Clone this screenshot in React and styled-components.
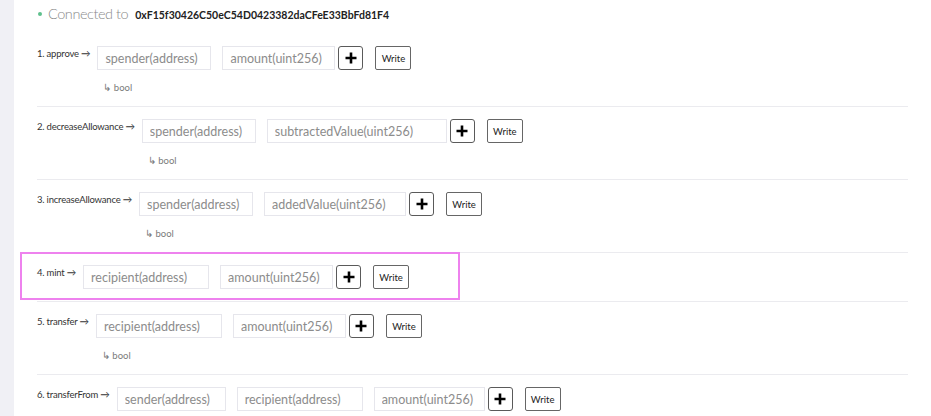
import React from "react";
import styled, { createGlobalStyle } from "styled-components";

const GlobalStyle = createGlobalStyle`
    body {
        margin: 0;
        background: #ffffff;
        font-family: Lato, "Noto Sans", sans-serif;
        color: #333;
    }
`;

const methods = [
    { name: "approve", inputs: [["spender(address)", 114], ["amount(uint256)", 113]], output: "bool" },
    { name: "decreaseAllowance", inputs: [["spender(address)", 114], ["subtractedValue(uint256)", 180]], output: "bool" },
    { name: "increaseAllowance", inputs: [["spender(address)", 114], ["addedValue(uint256)", 142]], output: "bool" },
    { name: "mint", inputs: [["recipient(address)", 126], ["amount(uint256)", 113]], highlight: true },
    { name: "transfer", inputs: [["recipient(address)", 126], ["amount(uint256)", 113]], output: "bool" },
    { name: "transferFrom", inputs: [["sender(address)", 109], ["recipient(address)", 126], ["amount(uint256)", 111]] },
];

const Page = styled.div`
    display: flex;
    min-height: 100vh;
`;

const Sidebar = styled.div`
    width: 14px;
    flex-shrink: 0;
    background: #f0f0f5;
`;

const Main = styled.div`
    flex: 1;
    padding: 0 23px;
`;

const Header = styled.div`
    display: flex;
    align-items: center;
    height: 20px;
    padding: 3px 0 11px;
`;

const Dot = styled.span`
    width: 4px;
    height: 4px;
    border-radius: 50%;
    background: #5fc08d;
    margin: 2px 6px 0 1px;
`;

const Status = styled.span`
    font-size: 14.5px;
    font-weight: 300;
    letter-spacing: -0.45px;
    color: #8a8a8a;
    margin-right: 7px;
`;

const Address = styled.span`
    font-size: 10.5px;
    font-weight: 700;
    color: #222;
    padding-top: 3px;
`;

const Row = styled.div`
    position: relative;
    display: grid;
    grid-template-columns: auto 1fr;
    column-gap: 7px;
    padding: 12px 0 ${p => (p.$output ? 10 : 12)}px;
    border-bottom: ${p => (p.$last ? "none" : "1px solid #ebebef")};

    ${p => p.$highlight && `
        &::after {
            content: "";
            position: absolute;
            top: -1px;
            left: -17px;
            width: 440px;
            height: 48px;
            box-sizing: border-box;
            border: 2px solid #ee82ee;
            pointer-events: none;
        }
    `}
`;

const Label = styled.div`
    font-size: 9.5px;
    letter-spacing: -0.2px;
    line-height: 16px;
    color: #333;
    white-space: nowrap;
`;

const Fields = styled.div`
    display: flex;
    align-items: center;
`;

const InputList = styled.div`
    display: flex;
    gap: 11px;
`;

const Input = styled.input`
    box-sizing: border-box;
    height: 24px;
    padding: 0 7px;
    border: 1px solid #e6e6ec;
    border-radius: 0;
    font-family: Lato, "Noto Sans", sans-serif;
    font-size: 12.5px;
    outline: none;

    &::placeholder {
        color: #8c8c8c;
    }
`;

const AddButton = styled.button`
    box-sizing: border-box;
    width: 25px;
    height: 24px;
    margin-left: 3px;
    padding: 0;
    display: flex;
    align-items: center;
    justify-content: center;
    background: #fff;
    border: 1px solid #5a5a5a;
    border-radius: 3px;
`;

const WriteButton = styled.button`
    box-sizing: border-box;
    width: 36px;
    height: 24px;
    margin-left: 12px;
    padding: 0;
    background: #fff;
    border: 1px solid #666;
    border-radius: 2px;
    font-family: Lato, "Noto Sans", sans-serif;
    font-size: 9.5px;
    color: #222;
`;

const Output = styled.div`
    grid-column: 2;
    margin-top: 10px;
    padding-left: 6px;
    font-size: 9.5px;
    line-height: 16px;
    color: #7a7a7a;
`;

const PlusIcon = () => (
    <svg width="12" height="12" viewBox="0 0 12 12">
        <path d="M6 0.5v11M0.5 6h11" stroke="#000" strokeWidth="2.6" />
    </svg>
);

export default function App() {
    return (
        <Page>
            <GlobalStyle />
            <Sidebar />
            <Main>
                <Header>
                    <Dot />
                    <Status>Connected to</Status>
                    <Address>0xF15f30426C50eC54D0423382daCFeE33BbFd81F4</Address>
                </Header>
                {methods.map((m, i) => (
                    <Row key={m.name} $output={!!m.output} $highlight={m.highlight} $last={i === methods.length - 1}>
                        <Label>{i + 1}. {m.name} →</Label>
                        <Fields>
                            <InputList>
                                {m.inputs.map(([ph, w]) => (
                                    <Input key={ph} placeholder={ph} style={{ width: w }} />
                                ))}
                            </InputList>
                            <AddButton><PlusIcon /></AddButton>
                            <WriteButton>Write</WriteButton>
                        </Fields>
                        {m.output && <Output>↳ {m.output}</Output>}
                    </Row>
                ))}
            </Main>
        </Page>
    );
}
